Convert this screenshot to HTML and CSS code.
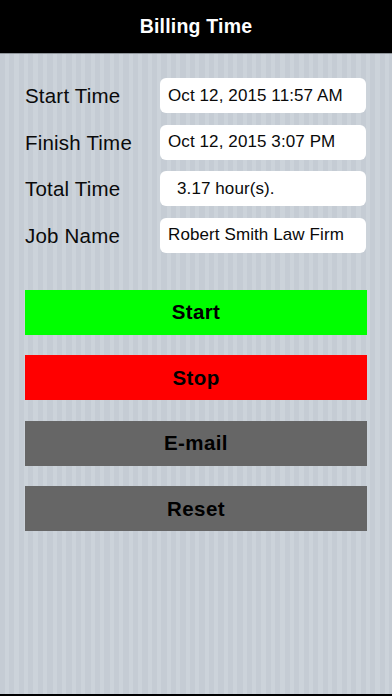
FILE: index.html
```html
<!DOCTYPE html>
<html>
<head>
<meta charset="utf-8">
<link rel="stylesheet" href="styles.css">
</head>
<body>
<div class="screen">
  <header class="navbar"><h1 class="title">Billing Time</h1></header>
  <main class="content">
    <div class="form">
      <div class="label">Start Time</div>
      <div class="field">Oct 12, 2015 11:57 AM</div>
      <div class="label">Finish Time</div>
      <div class="field">Oct 12, 2015 3:07 PM</div>
      <div class="label">Total Time</div>
      <div class="field field-indent">3.17 hour(s).</div>
      <div class="label">Job Name</div>
      <div class="field">Robert Smith Law Firm</div>
    </div>
    <div class="buttons">
      <button class="btn btn-start">Start</button>
      <button class="btn btn-stop">Stop</button>
      <button class="btn btn-gray">E-mail</button>
      <button class="btn btn-gray">Reset</button>
    </div>
  </main>
  <div class="bottom-bar"></div>
</div>
</body>
</html>
```

FILE: styles.css
```css
html, body {
  margin: 0;
  padding: 0;
}
body {
  font-family: "Liberation Sans", Arial, sans-serif;
  background: #c6cdd5;
}
.screen {
  width: 392px;
  height: 696px;
  display: flex;
  flex-direction: column;
  overflow: hidden;
}
.navbar {
  height: 54px;
  flex: none;
  background: #000;
  display: flex;
  align-items: center;
  justify-content: center;
  border-bottom: 1px solid #8e949a;
  box-sizing: border-box;
}
.title {
  margin: 0;
  color: #fff;
  font-size: 19.5px;
  font-weight: bold;
  letter-spacing: 0.2px;
}
.content {
  flex: 1;
  padding: 24px 25px 0 25px;
  background-color: #c5ccd4;
  background-image: repeating-linear-gradient(90deg, #c5ccd4 0px, #c5ccd4 5px, #ccd3da 5px, #ccd3da 9.5px);
}
.form {
  display: grid;
  grid-template-columns: 135px 1fr;
  grid-auto-rows: 35px;
  row-gap: 11.5px;
  align-items: center;
}
.label {
  font-size: 20.5px;
  color: #0a0a0a;
  padding-top: 1px;
  letter-spacing: 0.2px;
}
.field {
  height: 35px;
  background: #fff;
  border-radius: 6px;
  display: flex;
  align-items: center;
  padding-left: 8px;
  margin-right: 1px;
  font-size: 17px;
  letter-spacing: 0.1px;
  color: #0a0a0a;
}
.field-indent {
  padding-left: 17px;
}
.buttons {
  margin-top: 37px;
  display: flex;
  flex-direction: column;
  gap: 20.5px;
}
.btn {
  height: 45px;
  border: none;
  margin: 0;
  padding: 0;
  font-family: "Liberation Sans", Arial, sans-serif;
  font-size: 20.5px;
  font-weight: bold;
  letter-spacing: 0.4px;
  color: #000;
  width: 342px;
}
.btn-start { background: #00ff00; }
.btn-stop { background: #ff0000; }
.btn-gray { background: #666666; }
.bottom-bar {
  height: 2px;
  flex: none;
  background: #000;
}
```
